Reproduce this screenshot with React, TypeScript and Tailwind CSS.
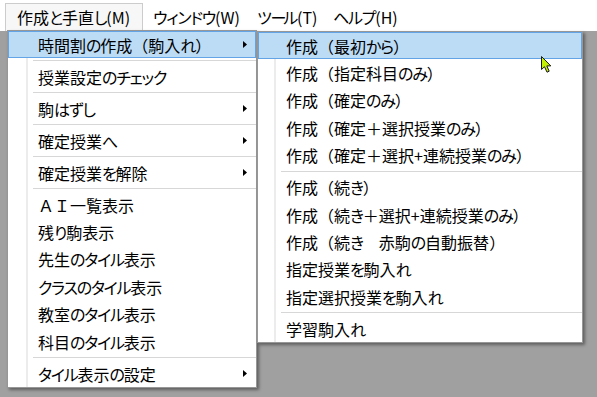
import React from "react";

type Item = { t: string; arrow?: boolean; hl?: boolean; sep?: boolean };

const SPLIT = /([（）　＋ＡＩ]+|[\u3041-\u30fb\u30fd-\u30ff]+|ー+)/;

function Txt({ s }: { s: string }) {
  const parts = s.split(SPLIT).filter((p) => p !== "");
  return (
    <span className="whitespace-pre [font-feature-settings:'palt']">
      {parts.map((p, i) => {
        if (/^[（）　＋ＡＩ]+$/.test(p))
          return (
            <span key={i} className="[font-feature-settings:normal]">
              {p}
            </span>
          );
        if (/^ー+$/.test(p))
          return (
            <span key={i} className="tracking-[-3px]">
              {p}
            </span>
          );
        if (/^[\u3041-\u30ff]+$/.test(p))
          return (
            <span key={i} className="tracking-[-1.2px]">
              {p}
            </span>
          );
        return <span key={i}>{p}</span>;
      })}
    </span>
  );
}

const menu1: Item[] = [
  { t: "時間割の作成（駒入れ）", arrow: true, hl: true, sep: true },
  { t: "授業設定のチェック", sep: true },
  { t: "駒はずし", arrow: true, sep: true },
  { t: "確定授業へ", arrow: true, sep: true },
  { t: "確定授業を解除", arrow: true, sep: true },
  { t: "ＡＩ一覧表示" },
  { t: "残り駒表示" },
  { t: "先生のタイル表示" },
  { t: "クラスのタイル表示" },
  { t: "教室のタイル表示" },
  { t: "科目のタイル表示", sep: true },
  { t: "タイル表示の設定", arrow: true },
];

const menu2: Item[] = [
  { t: "作成（最初から）", hl: true },
  { t: "作成（指定科目のみ）" },
  { t: "作成（確定のみ）" },
  { t: "作成（確定＋選択授業のみ）" },
  { t: "作成（確定＋選択+連続授業のみ）", sep: true },
  { t: "作成（続き）" },
  { t: "作成（続き＋選択+連続授業のみ）" },
  { t: "作成（続き　赤駒の自動振替）" },
  { t: "指定授業を駒入れ" },
  { t: "指定選択授業を駒入れ", sep: true },
  { t: "学習駒入れ" },
];

function Arrow() {
  return (
    <svg width="4" height="7" viewBox="0 0 4 7" className="shrink-0">
      <polygon points="0,0 4,3.5 0,7" fill="#000" />
    </svg>
  );
}

function Row({ it, lead }: { it: Item; lead: "w-[18px]" | "w-[16px]" }) {
  return (
    <>
      <div
        className={
          it.hl
            ? "flex h-[27.4px] items-center bg-[#bcdcf5] shadow-[inset_0_0_0_1px_#62a4e6]"
            : "flex h-[27.4px] items-center"
        }
      >
        <div className={lead + " shrink-0"} />
        <div
          className={
            it.hl
              ? "w-[2px] self-stretch shrink-0"
              : "w-[2px] self-stretch shrink-0 bg-[#ececec]"
          }
        />
        <div className="flex-1 pl-[10px] text-[16px] leading-none text-black">
          <Txt s={it.t} />
        </div>
        {it.arrow && (
          <div className="pr-[9px] flex items-center">
            <Arrow />
          </div>
        )}
      </div>
      {it.sep && (
        <div className="flex h-[4.6px]">
          <div className={lead + " shrink-0"} />
          <div className="w-[2px] self-stretch shrink-0 bg-[#ececec]" />
          <div className="flex-1 ml-[5px] flex items-center">
            <div className="h-px w-full bg-[#d7d7d7]" />
          </div>
        </div>
      )}
    </>
  );
}

export default function App() {
  return (
    <div className="relative w-[597px] h-[397px] overflow-hidden bg-[#a0a0a0] font-['Noto_Sans_CJK_JP','Noto_Sans_CJK_SC',sans-serif] text-black">
      {/* menu bar */}
      <div className="flex h-[31px] bg-white text-[16px] leading-none">
        <div className="ml-[5px] mt-[3px] flex h-[28px] w-[138px] items-center border-x border-t border-[#cccccc] bg-[#f7f7f7] pl-[11px] pb-[1px]">
          <Txt s="作成と手直し(M)" />
        </div>
        <div className="mt-[3px] flex h-[28px] w-[103px] items-center pl-[10px] pb-[1px]">
          <Txt s="ウィンドウ(W)" />
        </div>
        <div className="mt-[3px] flex h-[28px] w-[77px] items-center pl-[11px] pb-[1px]">
          <Txt s="ツール(T)" />
        </div>
        <div className="mt-[3px] flex h-[28px] items-center pl-[10px] pb-[1px]">
          <Txt s="ヘルプ(H)" />
        </div>
      </div>

      {/* first dropdown */}
      <div className="absolute left-[7px] top-[30px] w-[250px] border border-[#979797] bg-white shadow-[2px_2px_3px_rgba(0,0,0,0.4)]">
        {menu1.map((it, i) => (
          <Row key={i} it={it} lead="w-[18px]" />
        ))}
      </div>

      {/* submenu */}
      <div className="absolute left-[257px] top-[31px] w-[326px] border border-[#979797] bg-white shadow-[2px_2px_3px_rgba(0,0,0,0.4)]">
        {menu2.map((it, i) => (
          <Row key={i} it={it} lead="w-[16px]" />
        ))}
      </div>

      {/* mouse cursor */}
      <svg
        className="absolute left-[541px] top-[56px]"
        width="12"
        height="18"
        viewBox="0 0 12 18"
      >
        <path
          d="M0.5 0.5 L0.5 13.5 L3.5 10.7 L6 16.2 L8.2 15.2 L5.8 9.9 L9.8 9.9 Z"
          fill="#c4f200"
          stroke="#1a1a1a"
          strokeWidth="1"
          strokeLinejoin="round"
        />
      </svg>
    </div>
  );
}
